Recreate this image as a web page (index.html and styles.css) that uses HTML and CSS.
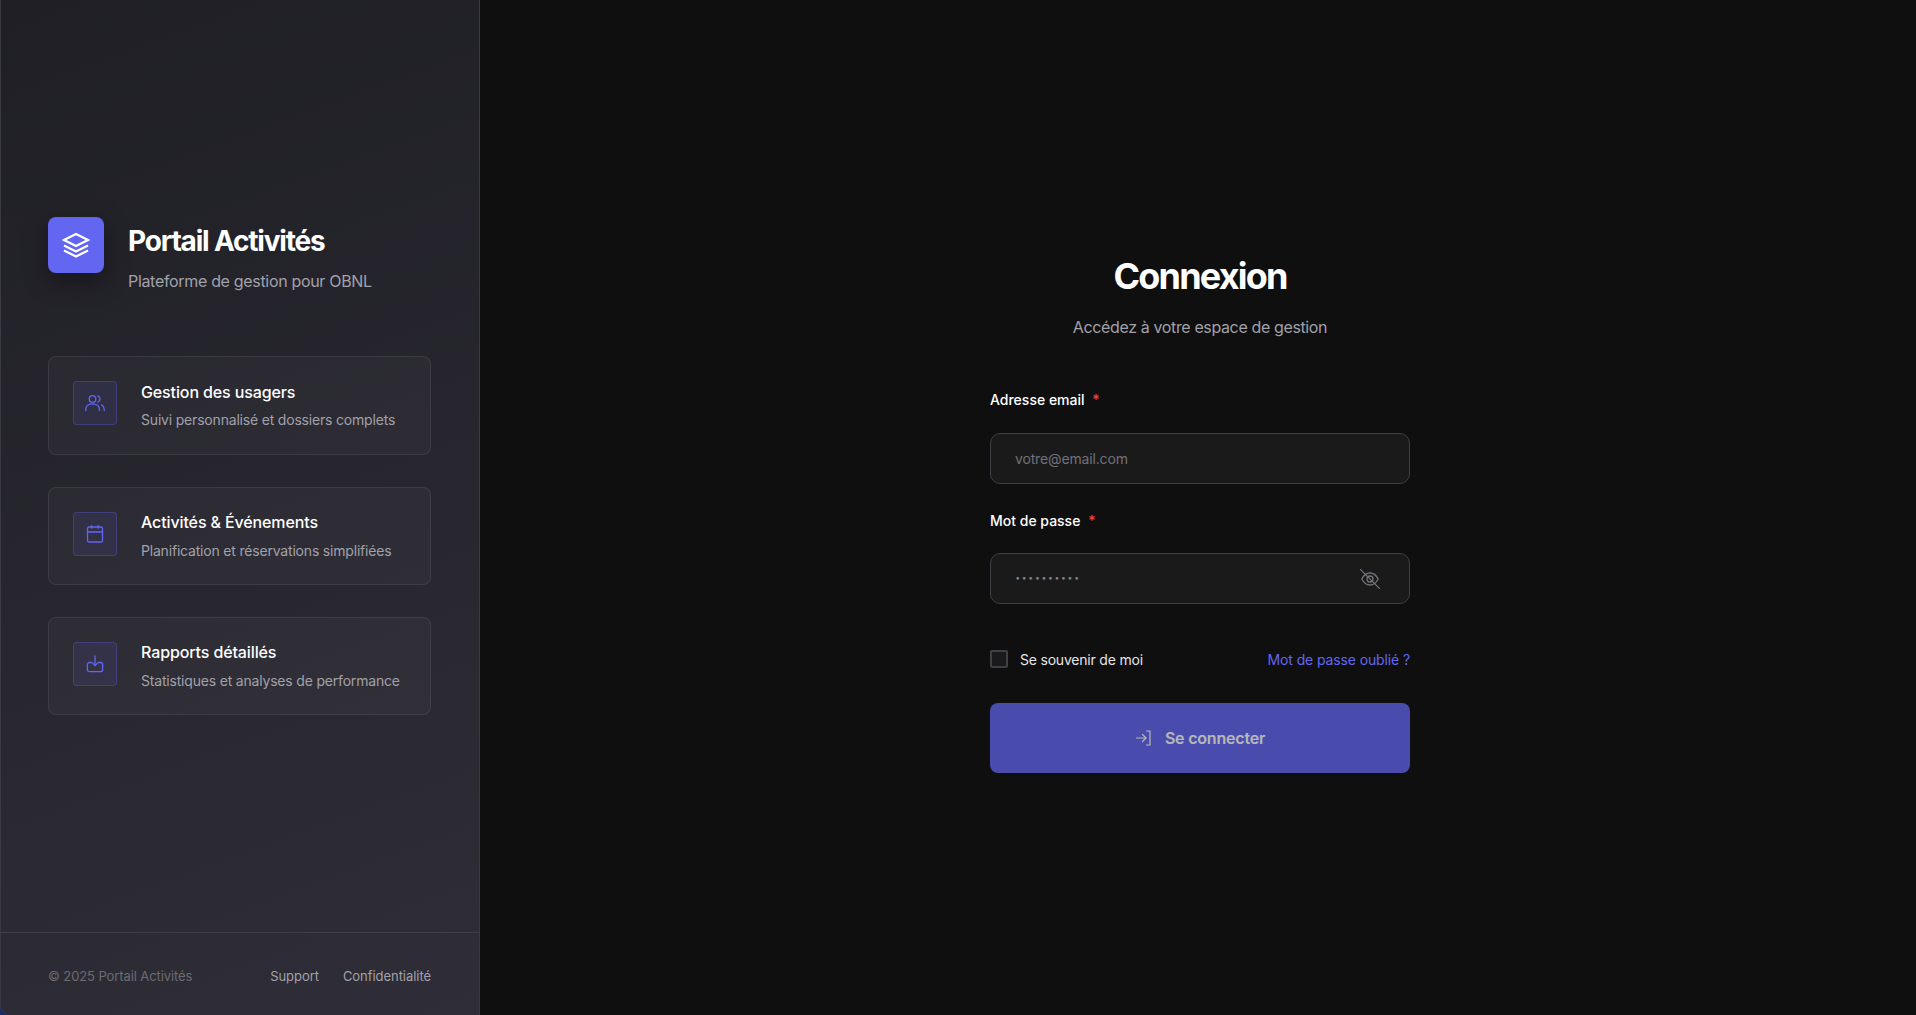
FILE: index.html
```html
<!DOCTYPE html>
<html lang="fr">
<head>
<meta charset="utf-8">
<title>Portail Activités</title>
<link rel="stylesheet" href="styles.css">
</head>
<body>
<div class="app">
  <aside class="side">
    <div class="side-body">
      <div class="brand">
        <div class="logo">
          <svg width="28" height="28" viewBox="0 0 28 28" fill="none" stroke="#fff" stroke-width="2.200" stroke-linejoin="miter"><path d="M14 3 26 9 14 15 2 9Z"/><path d="M2 14.500 14 20.500 26 14.500"/><path d="M2 19.500 14 25.500 26 19.500"/></svg>
        </div>
        <div class="brand-text">
          <h1 class="brand-title">Portail Activités</h1>
          <p class="brand-sub">Plateforme de gestion pour OBNL</p>
        </div>
      </div>
      <div class="cards">
        <div class="card">
          <div class="card-icon">
            <svg width="20" height="20" viewBox="0 0 20 20" fill="none" stroke="currentColor" stroke-width="1.3" stroke-linecap="round"><circle cx="7.5" cy="6" r="3.3"/><path d="M.8 17.500v-1.300a5 5 0 0 1 5-5h3.600a5 5 0 0 1 5 5v1.300"/><path d="M12.800 2.800a3.400 3.400 0 0 1 0 6.400"/><path d="M19.200 17.500v-1.300a5 5 0 0 0-2.600-4.300"/></svg>
          </div>
          <div class="card-text">
            <h3 class="card-title">Gestion des usagers</h3>
            <p class="card-desc">Suivi personnalisé et dossiers complets</p>
          </div>
        </div>
        <div class="card">
          <div class="card-icon">
            <svg width="20" height="20" viewBox="0 0 20 20" fill="none" stroke="currentColor" stroke-width="1.3" stroke-linecap="round"><rect x="2.5" y="3" width="15" height="15" rx="1.6"/><path d="M2.500 8h15"/><path d="M6.700 1.600v2.600"/><path d="M13.300 1.600v2.600"/></svg>
          </div>
          <div class="card-text">
            <h3 class="card-title">Activités &amp; Événements</h3>
            <p class="card-desc">Planification et réservations simplifiées</p>
          </div>
        </div>
        <div class="card">
          <div class="card-icon">
            <svg width="20" height="20" viewBox="0 0 20 20" fill="none" stroke="currentColor" stroke-width="1.3" stroke-linecap="round" stroke-linejoin="round"><path d="M10 2v9.500"/><path d="M8 9.500l2 2 2-2"/><path d="M7 8.500H4.400a2 2 0 0 0-2 2v5.200a2 2 0 0 0 2 2h11.200a2 2 0 0 0 2-2v-5.200a2 2 0 0 0-2-2H13"/></svg>
          </div>
          <div class="card-text">
            <h3 class="card-title">Rapports détaillés</h3>
            <p class="card-desc">Statistiques et analyses de performance</p>
          </div>
        </div>
      </div>
    </div>
    <footer class="side-foot">
      <span class="copy">© 2025 Portail Activités</span>
      <nav class="foot-links">
        <a class="foot-link" href="#">Support</a>
        <a class="foot-link" href="#">Confidentialité</a>
      </nav>
    </footer>
  </aside>
  <main class="main">
    <form class="form">
      <h2 class="form-title">Connexion</h2>
      <p class="form-sub">Accédez à votre espace de gestion</p>
      <div class="field">
        <label class="label" for="email">Adresse email <span class="req">*</span></label>
        <input class="input" id="email" type="email" placeholder="votre@email.com">
      </div>
      <div class="field">
        <label class="label" for="pw">Mot de passe <span class="req">*</span></label>
        <div class="pw-wrap">
          <input class="input pw" id="pw" type="password" placeholder="··········">
          <svg class="eye" width="20" height="20" viewBox="0 0 20 20" fill="none" stroke="currentColor" stroke-width="1.3" stroke-linecap="round"><path d="M1.800 10C4 5.700 7 4 10 4s6 1.700 8.200 6C16 14.300 13 16 10 16S4 14.300 1.800 10Z"/><circle cx="10" cy="10" r="3"/><path d="M.6.6l18.800 18.800"/></svg>
        </div>
      </div>
      <div class="row">
        <label class="remember"><input class="check" type="checkbox"><span class="row-text">Se souvenir de moi</span></label>
        <a class="forgot row-text" href="#">Mot de passe oublié ?</a>
      </div>
      <button class="submit" type="button">
        <svg width="18" height="18" viewBox="0 0 18 18" fill="none" stroke="currentColor" stroke-width="1.2" stroke-linecap="round" stroke-linejoin="round"><path d="M1.500 9h9.500"/><path d="M7.500 5.500 11 9l-3.500 3.500"/><path d="M11.500 2h3.500v14h-3.500"/></svg>
        <span>Se connecter</span>
      </button>
    </form>
  </main>
</div>
</body>
</html>
```
FILE: styles.css
```css
* { box-sizing: border-box; }
html, body { height: 100%; }
body {
  margin: 0;
  font-family: Inter, "Liberation Sans", sans-serif;
  color: #fff;
}
h1, h2, h3, p { margin: 0; }
a { text-decoration: none; }

.app { display: flex; height: 100vh; overflow: hidden; background: #1c2a6a; }

.side {
  width: 480px;
  flex: none;
  display: flex;
  flex-direction: column;
  background: linear-gradient(160deg, #1f1f25 0%, #2f2d37 100%);
  border-left: 1px solid #3a3a44;
  border-right: 1px solid #3a3a44;
  border-bottom-left-radius: 10px;
}
.side-body {
  flex: 1;
  display: flex;
  flex-direction: column;
  justify-content: center;
  padding: .5px 48px 0 47px;
}
.brand { display: flex; align-items: flex-start; gap: 24px; margin-bottom: 63px; }
.logo {
  width: 56px;
  height: 56px;
  flex: none;
  border-radius: 8px;
  background: #6366f1;
  box-shadow: 0 8px 24px rgba(0, 0, 0, .4);
  display: flex;
  align-items: center;
  justify-content: center;
}
.brand-text { padding-top: 7px; }
.brand-title { font-size: 28px; line-height: 34px; font-weight: 700; letter-spacing: -1.2px; margin-bottom: 11px; }
.brand-sub { font-size: 16px; line-height: 24px; color: #a1a1aa; letter-spacing: -.32px; }

.cards { display: flex; flex-direction: column; gap: 32px; }
.card {
  display: flex;
  gap: 24px;
  height: 98.2px;
  padding: 24px;
  background: rgba(255, 255, 255, .03);
  border: 1px solid rgba(255, 255, 255, .08);
  border-radius: 8px;
}
.card-icon {
  width: 44px;
  height: 44px;
  flex: none;
  border-radius: 4px;
  background: rgba(99, 102, 241, .1);
  border: 1px solid rgba(99, 102, 241, .3);
  color: #6366f1;
  display: flex;
  align-items: center;
  justify-content: center;
}
.card-text { margin-top: -.5px; }
.card-title { font-size: 16px; line-height: 22px; font-weight: 500; letter-spacing: -.12px; margin-bottom: 6.5px; }
.card-desc { font-size: 14px; line-height: 21px; color: #a1a1aa; letter-spacing: -.19px; white-space: nowrap; }

.side-foot {
  height: 83px;
  flex: none;
  display: flex;
  align-items: center;
  justify-content: space-between;
  padding: 4px 48px 0 47px;
  border-top: 1px solid #3f3f47;
}
.copy { font-size: 13px; color: #6b6b73; letter-spacing: -.1px; }
.foot-links { display: flex; gap: 24px; }
.foot-link { font-size: 13px; color: #a1a1aa; letter-spacing: -.05px; }

.main { flex: 1; display: flex; align-items: center; justify-content: center; padding: 11px 0 0 4px; background: #0f0f0f; }
.form { width: 420px; }
.form-title { font-size: 36px; line-height: 44px; font-weight: 700; letter-spacing: -1.8px; text-align: center; margin-bottom: 17px; }
.form-sub { font-size: 16px; line-height: 24px; color: #a1a1aa; letter-spacing: -.37px; text-align: center; margin-bottom: 50px; }
.field { margin-bottom: 26px; }
.label { display: block; font-size: 14px; line-height: 21px; font-weight: 500; margin-bottom: 22px; }
.field:first-of-type .label { margin-bottom: 23px; }
.req { color: #ef4444; margin-left: 4px; }
.input {
  display: block;
  width: 100%;
  height: 51px;
  padding: 0 24px;
  background: #1a1a1a;
  border: 1px solid #3f3f46;
  border-radius: 10px;
  color: #fff;
  font: 14px Inter, "Liberation Sans", sans-serif;
  letter-spacing: -.15px;
  outline: none;
}
.input::placeholder { color: #71717a; opacity: 1; }
.pw-wrap { position: relative; }
.pw::placeholder { font-size: 16px; font-weight: 700; color: #85858d; letter-spacing: 1.2px; }
.eye { position: absolute; right: 30px; top: 16px; color: #71717a; }
.row { display: flex; align-items: center; justify-content: space-between; margin: 46px 0 35px; }
.row-text { padding-top: 1px; }
.remember { display: flex; align-items: center; gap: 12px; font-size: 14px; color: #e4e4e7; letter-spacing: -.2px; }
.check {
  appearance: none;
  width: 18px;
  height: 18px;
  margin: 0;
  border: 2px solid #3f3f46;
  border-radius: 2px;
  background: #1a1a1a;
}
.forgot { font-size: 14px; color: #6366f1; letter-spacing: -.12px; }
.submit {
  width: 100%;
  height: 70px;
  display: flex;
  align-items: center;
  justify-content: center;
  gap: 12px;
  background: #6366f1;
  color: #fff;
  border: 0;
  border-radius: 8px;
  opacity: .7;
  font: 600 16px Inter, "Liberation Sans", sans-serif;
  letter-spacing: -.2px;
}
```
